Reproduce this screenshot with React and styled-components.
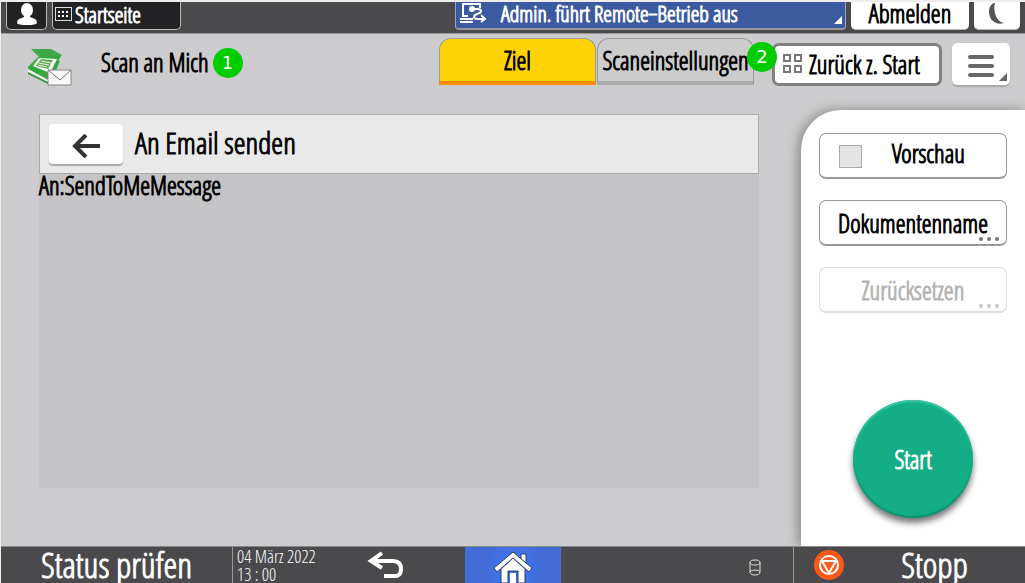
import React from "react";
import styled, { createGlobalStyle } from "styled-components";

function App() {
    const [tab, setTab] = React.useState("ziel");
    const [preview, setPreview] = React.useState(false);

    return (
        <Page>
            <GlobalStyle/>
            <TopBar>
                <DarkButton aria-label="Benutzer" $width={41}>
                    <UserIcon/>
                </DarkButton>
                <DarkButton $width={129}>
                    <KeypadIcon/>
                    Startseite
                </DarkButton>
                <RemoteButton>
                    <RemoteIcon/>
                    Admin. führt Remote−Betrieb aus
                    <Corner $color="#fff"/>
                </RemoteButton>
                <LightButton $width={118}>Abmelden</LightButton>
                <LightButton $width={46} aria-label="Energiesparmodus">
                    <MoonIcon/>
                </LightButton>
            </TopBar>

            <AppBar>
                <ScanIcon/>
                <AppTitle>Scan an Mich</AppTitle>
                <Badge>1</Badge>
                <Tabs>
                    <Tab $active={tab === "ziel"} onClick={() => setTab("ziel")}>Ziel</Tab>
                    <Tab $active={tab === "scan"} onClick={() => setTab("scan")}>Scaneinstellungen</Tab>
                </Tabs>
                <HomeLink>
                    <FloatingBadge>2</FloatingBadge>
                    <GridIcon/>
                    Zurück z. Start
                </HomeLink>
                <MenuButton aria-label="Menü">
                    <MenuIcon/>
                    <Corner $color="#666"/>
                </MenuButton>
            </AppBar>

            <Body>
                <Card>
                    <CardHeader>
                        <BackButton aria-label="Zurück">
                            <ArrowIcon/>
                        </BackButton>
                        <CardTitle>An Email senden</CardTitle>
                    </CardHeader>
                    <Recipient>An:SendToMeMessage</Recipient>
                </Card>
                <SidePanel>
                    <CheckRow>
                        <CheckBox
                            type="checkbox"
                            checked={preview}
                            onChange={(e) => setPreview(e.target.checked)}
                        />
                        <CheckText>Vorschau</CheckText>
                    </CheckRow>
                    <SideButton>
                        Dokumentenname
                        <Dots/>
                    </SideButton>
                    <SideButton disabled>
                        Zurücksetzen
                        <Dots/>
                    </SideButton>
                    <StartButton>Start</StartButton>
                </SidePanel>
            </Body>

            <Footer>
                <StatusButton>Status prüfen</StatusButton>
                <Clock>
                    <span>04 März 2022</span>
                    <span>13 : 00</span>
                </Clock>
                <FooterMiddle>
                    <FooterButton aria-label="Zurück">
                        <ReturnIcon/>
                    </FooterButton>
                    <HomeButton aria-label="Startseite">
                        <HouseIcon/>
                    </HomeButton>
                    <Storage>
                        <DiskIcon/>
                    </Storage>
                </FooterMiddle>
                <StopButton>
                    <StopIcon/>
                    <StopText>Stopp</StopText>
                </StopButton>
            </Footer>
        </Page>
    );
}

/* icons */

const UserIcon = () => (
    <svg width="20" height="22" viewBox="0 0 20 22" fill="#fff">
        <ellipse cx="10" cy="7" rx="6" ry="7"/>
        <path d="M7 12h6v2l5 2q2 1 2 4-1 2-10 2T0 20q0-3 2-4l5-2z"/>
    </svg>
);

const KeypadIcon = () => (
    <svg width="17" height="14" viewBox="0 0 17 14">
        <rect x="0.5" y="0.5" width="16" height="13" fill="none" stroke="#ddd"/>
        <path d="M3 4h2v2H3zM7 4h2v2H7zM11 4h2v2h-2zM3 8h2v2H3zM7 8h2v2H7zM11 8h2v2h-2z" fill="#fff"/>
    </svg>
);

const RemoteIcon = () => (
    <svg width="27" height="20" viewBox="0 0 27 20" fill="none" stroke="#fff" strokeWidth="2">
        <path d="M8 13H3V1h17v4M0 16h13M0 19h13"/>
        <circle cx="12" cy="6" r="2" fill="#fff"/>
        <path d="M13 6h4q4 0 4 2t-4 3q-3 1-3 3 0 2 4 2h7M21 12l4 4-4 3"/>
    </svg>
);

const MoonIcon = () => (
    <svg width="16" height="21" viewBox="0 0 16 21" fill="#555558">
        <path d="M5 0C0 2-1 9 1 14c2 5 8 8 14 6-5-1-8-5-9-10-1-4-1-7 0-10z"/>
    </svg>
);

const ScanIcon = () => (
    <ScanSvg width="45" height="38" viewBox="0 0 45 38">
        <path d="M1 18L9 10l24 2-6 14-4 6L1 21z" fill="#35a83d"/>
        <path d="M1 20l22 12v3L1 23z" fill="#fafafa"/>
        <path d="M1 23l20 10v2L1 25z" fill="#2d9435"/>
        <path d="M4 0h20l11 6-3 3-20-1z" fill="#42a746"/>
        <path d="M11 8l23-1-9 16H13L4 17z" fill="#35a83d"/>
        <path d="M12 9l18 1-7 14L6 17z" fill="#fff"/>
        <path d="M14 10l12 1-5 9-12-3z" fill="#5aaa4c"/>
        <path d="M14 12l10 2M12 14l10 2M11 16l9 2" stroke="#f0f8ec"/>
        <path d="M21 21h23v15H21z" fill="#f8f8f8" stroke="#888"/>
        <path d="M21 21l12 10 11-10" fill="none" stroke="#777"/>
    </ScanSvg>
);

const GridIcon = () => (
    <svg width="19" height="19" viewBox="0 0 19 19" fill="none" stroke="#777" strokeWidth="2">
        <path d="M1 1h6v6H1zM12 1h6v6h-6zM1 12h6v6H1zM12 12h6v6h-6z"/>
    </svg>
);

const MenuIcon = () => (
    <svg width="26" height="22" viewBox="0 0 26 22" stroke="#666" strokeWidth="4" strokeLinecap="round">
        <path d="M2 2h22M2 11h22M2 20h22"/>
    </svg>
);

const ArrowIcon = () => (
    <svg width="28" height="24" viewBox="0 0 28 24" fill="none" stroke="#333" strokeWidth="4">
        <path d="M28 12H4M14 1L3 12l11 11"/>
    </svg>
);

const ReturnIcon = () => (
    <svg width="37" height="28" viewBox="0 0 37 28" fill="none" stroke="#fff" strokeWidth="4">
        <path d="M3 10h23q8 0 8 8t-8 7h-9"/>
        <path d="M15 2L4 10l11 7"/>
    </svg>
);

const HouseIcon = () => (
    <svg width="38" height="31" viewBox="0 0 38 31" fill="#fff" stroke="#263c70">
        <path d="M7 17L19 6l12 11v14H7z"/>
        <path d="M27 2h5v10l-5-4z"/>
        <path d="M19 0L0 16l3 4L19 6l16 14 3-4z"/>
        <path d="M14 31V19h10v12" fill="#436cd6"/>
        <path d="M16 31V21h6v10" stroke="none"/>
    </svg>
);

const DiskIcon = () => (
    <svg width="12" height="17" viewBox="0 0 12 17" fill="none" stroke="#ddd">
        <ellipse cx="6" cy="3.5" rx="5" ry="2.5"/>
        <path d="M1 3v10q0 3 5 3t5-3V3M1 13q0-2 5-2t5 2"/>
    </svg>
);

const StopIcon = () => (
    <svg width="30" height="30" viewBox="0 0 30 30">
        <circle cx="15" cy="15" r="15" fill="#ff581b"/>
        <circle cx="15" cy="15" r="9" fill="none" stroke="#fff" strokeWidth="2"/>
        <path d="M8 11h14l-7 12z" fill="#ff581b" stroke="#fff" strokeWidth="2" strokeLinejoin="round"/>
    </svg>
);

const Dots = () => (
    <DotsSvg width="20" height="4" viewBox="0 0 20 4" fill="#777">
        <circle cx="2" cy="2" r="2"/>
        <circle cx="10" cy="2" r="2"/>
        <circle cx="18" cy="2" r="2"/>
    </DotsSvg>
);

/* styles */

const GlobalStyle = createGlobalStyle`
* {
    box-sizing: border-box;
}
body {
    margin: 0;
    background-color: #cccbcd;
    color: #000;
    /* the light cut is too thin on the panel, thicken it a bit */
    -webkit-text-stroke: 1px;
}
body, button, input {
    font-family: "Open Sans Condensed Light", "Roboto Condensed", "Noto Sans", sans-serif;
}
button {
    margin: 0;
    padding: 0;
    border: 0;
    color: inherit;
    cursor: pointer;
    white-space: nowrap;
}
svg {
    flex: none;
}
`;

const Page = styled.div`
display: flex;
flex-direction: column;
min-height: 100vh;
border-left: 1px solid #eee;
`;

const TopBar = styled.header`
display: flex;
align-items: flex-start;
gap: 5px;
height: 34px;
padding: 0 5px;
border-top: 2px solid #eee;
border-bottom: 1px solid #98989a;
background-color: #4a4a4d;
`;

const DarkButton = styled.button`
display: flex;
align-items: center;
justify-content: ${(props) => (props.$width > 100 ? "flex-start" : "center")};
gap: 3px;
width: ${(props) => props.$width}px;
height: 28px;
padding: 0 2px 4px;
border: 1px solid #bbb;
border-top: 0;
border-radius: 0 0 5px 5px;
background-color: #222224;
color: #fff;
font-size: 22px;
line-height: 22px;
`;

const RemoteButton = styled.button`
position: relative;
display: flex;
align-items: center;
gap: 14px;
width: 391px;
height: 28px;
margin-left: auto;
padding: 0 4px 4px;
border: 1px solid #8fa6d3;
border-top: 0;
border-bottom: 2px solid #999;
border-radius: 0 0 4px 4px;
background-color: #3c5a9f;
color: #fff;
font-size: 22px;
line-height: 22px;
`;

const LightButton = styled.button`
display: flex;
align-items: center;
justify-content: center;
width: ${(props) => props.$width}px;
height: 28px;
padding-bottom: 5px;
border-bottom: 1px solid #bbb;
border-radius: 0 0 5px 5px;
background-color: #fff;
font-size: 25px;
line-height: 22px;
`;

const Corner = styled.i`
position: absolute;
right: 3px;
bottom: 4px;
border-left: 8px solid transparent;
border-bottom: 8px solid ${(props) => props.$color};
`;

const AppBar = styled.nav`
display: flex;
align-items: flex-start;
height: 76px;
padding: 4px 15px 0 26px;
`;

const ScanSvg = styled.svg`
margin-top: 11px;
`;

const AppTitle = styled.h1`
margin: 8px 4px 0 29px;
font-size: 25px;
font-weight: 400;
line-height: 32px;
white-space: nowrap;
`;

const Badge = styled.span`
flex: none;
width: 30px;
height: 30px;
margin-top: 10px;
border-radius: 50%;
background-color: #00cc02;
color: #fff;
font-family: "DejaVu Sans", sans-serif;
font-size: 18px;
line-height: 30px;
text-align: center;
-webkit-text-stroke: 0;
`;

const FloatingBadge = styled(Badge)`
position: absolute;
left: -28px;
top: -4px;
margin: 0;
`;

const Tabs = styled.div`
display: flex;
gap: 1px;
margin-left: auto;
`;

const Tab = styled.button`
width: 157px;
height: 47px;
border: 1px solid #999;
border-bottom: 4px solid ${(props) => (props.$active ? "#ff8c05" : "#aaa")};
border-radius: 12px 12px 0 0;
background-color: ${(props) => (props.$active ? "#ffd204" : "#cdcccd")};
font-size: 25px;
`;

const HomeLink = styled.button`
position: relative;
display: flex;
align-items: center;
gap: 7px;
width: 170px;
height: 43px;
margin: 5px 10px 0 18px;
padding: 0 8px 2px;
border: 3px solid #808080;
border-radius: 7px;
background-color: #fff;
font-size: 25px;
`;

const MenuButton = styled.button`
position: relative;
display: flex;
align-items: center;
justify-content: center;
width: 58px;
height: 42px;
margin-top: 5px;
padding-top: 4px;
border-radius: 5px;
background-color: #fff;
box-shadow: 0 2px 1px #aaa;
`;

const Body = styled.main`
display: flex;
flex: 1;
`;

const Card = styled.section`
flex: 1;
margin: 4px 42px 58px 38px;
background-color: #c4c3c5;
`;

const CardHeader = styled.div`
display: flex;
align-items: center;
gap: 12px;
height: 60px;
padding-left: 9px;
border: 1px solid #aaa;
background-color: #e9e9e9;
`;

const BackButton = styled.button`
display: flex;
align-items: center;
justify-content: center;
width: 74px;
height: 40px;
padding-top: 4px;
border-radius: 4px;
background-color: #fff;
box-shadow: 0 2px 1px #aaa;
`;

const CardTitle = styled.h2`
margin: 0;
padding-bottom: 3px;
font-size: 30px;
font-weight: 400;
`;

const Recipient = styled.p`
margin: 0;
font-size: 25px;
line-height: 22px;
`;

const SidePanel = styled.aside`
display: flex;
flex-direction: column;
gap: 21px;
width: 224px;
padding: 23px 18px 28px;
border-radius: 40px 0 0 0;
background-color: #fff;
box-shadow: -3px 0 12px #888;
clip-path: inset(-12px 0 0 -20px);
`;

const CheckRow = styled.label`
display: flex;
align-items: center;
height: 46px;
padding: 0 19px;
border: 1px solid #999;
border-bottom-width: 2px;
border-radius: 7px;
font-size: 25px;
cursor: pointer;
`;

const CheckBox = styled.input`
appearance: none;
width: 23px;
height: 23px;
margin: 2px 0 0;
border: 1px solid #aaa;
background-color: ${(props) => (props.checked ? "#ffd204" : "#e4e4e6")};
`;

const CheckText = styled.span`
flex: 1;
padding: 0 0 5px 8px;
text-align: center;
`;

const SideButton = styled.button`
position: relative;
height: 46px;
border: 1px solid #999;
border-bottom-width: 2px;
border-radius: 7px;
background-color: #fff;
font-size: 25px;

&:disabled {
    border-color: #ddd;
    color: #b4b4b4;
    cursor: default;
}
&:disabled svg {
    opacity: 0.4;
}
`;

const DotsSvg = styled.svg`
position: absolute;
right: 7px;
bottom: 3px;
`;

const StartButton = styled.button`
align-self: center;
width: 120px;
height: 118px;
margin-top: auto;
border-radius: 50%;
background-color: #14ae86;
box-shadow: inset 0 2px 2px #3cc9a4, inset 0 -2px 2px #0c8f6c, 0 5px 6px #777;
color: #fff;
font-size: 25px;
`;

const Footer = styled.footer`
display: flex;
height: 37px;
border-top: 1px solid #88888a;
background-color: #4a4a4d;
color: #fff;
`;

const FooterButton = styled.button`
display: flex;
flex: none;
align-items: center;
justify-content: center;
width: 96px;
background-color: transparent;
`;

const StatusButton = styled(FooterButton)`
width: 231px;
font-size: 35px;
line-height: 36px;
`;

const Clock = styled.div`
display: flex;
flex: none;
flex-direction: column;
width: 105px;
padding-left: 4px;
border-left: 1px solid #999;
font-size: 18px;
line-height: 18px;
white-space: nowrap;
-webkit-text-stroke: 0;
`;

const FooterMiddle = styled.div`
display: flex;
flex: 1;
`;

const HomeButton = styled(FooterButton)`
margin-left: 32px;
padding-top: 4px;
background: radial-gradient(circle at 50% 60%, #3a7cff, #436cd6 55%);
`;

const Storage = styled.span`
display: flex;
align-items: center;
margin-left: auto;
padding: 4px 32px 0 0;
`;

const StopButton = styled(FooterButton)`
width: 232px;
padding-left: 20px;
border-left: 1px solid #999;
font-size: 35px;
line-height: 36px;
`;

const StopText = styled.span`
flex: 1;
text-align: center;
`;

export default App;
